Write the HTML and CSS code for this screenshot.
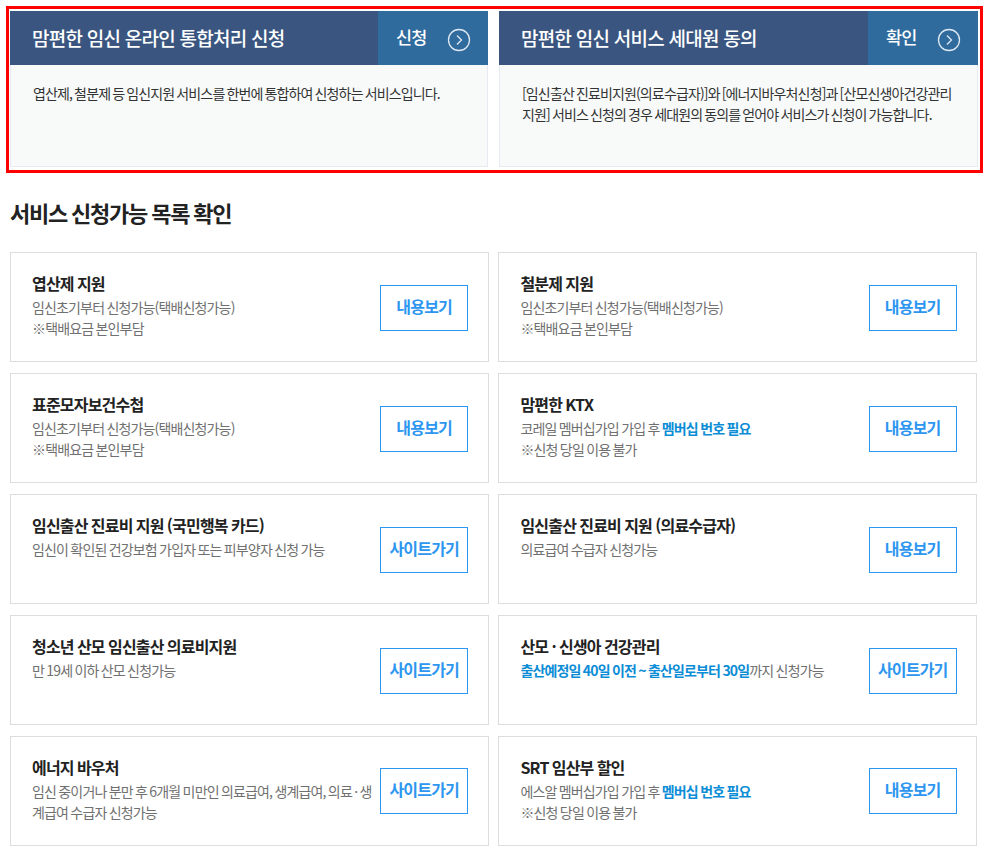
FILE: index.html
```html
<!DOCTYPE html>
<html lang="ko">
<head>
<meta charset="utf-8">
<title>서비스 신청</title>
<link rel="stylesheet" href="styles.css">
</head>
<body>
<section class="highlight">
  <article class="panel">
    <header class="panel-head">
      <h2 class="panel-title">맘편한 임신 온라인 통합처리 신청</h2>
      <a class="panel-btn"><span>신청</span><svg class="chev" viewBox="0 0 24 24" width="24" height="24"><circle cx="12" cy="12" r="10.5"/><path d="M10 7.5l4.5 4.5-4.5 4.5"/></svg></a>
    </header>
    <p class="panel-body">엽산제, 철분제 등 임신지원 서비스를 한번에 통합하여 신청하는 서비스입니다.</p>
  </article>
  <article class="panel">
    <header class="panel-head">
      <h2 class="panel-title">맘편한 임신 서비스 세대원 동의</h2>
      <a class="panel-btn"><span>확인</span><svg class="chev" viewBox="0 0 24 24" width="24" height="24"><circle cx="12" cy="12" r="10.5"/><path d="M10 7.5l4.5 4.5-4.5 4.5"/></svg></a>
    </header>
    <p class="panel-body">[임신출산 진료비지원(의료수급자)]와 [에너지바우처신청]과 [산모신생아건강관리 지원] 서비스 신청의 경우 세대원의 동의를 얻어야 서비스가 신청이 가능합니다.</p>
  </article>
</section>
<h1 class="section-title">서비스 신청가능 목록 확인</h1>
<section class="cards">
  <div class="card"><div class="info"><h3>엽산제 지원</h3><p>임신초기부터 신청가능(택배신청가능)<br>※택배요금 본인부담</p></div><a class="btn">내용보기</a></div>
  <div class="card"><div class="info"><h3>철분제 지원</h3><p>임신초기부터 신청가능(택배신청가능)<br>※택배요금 본인부담</p></div><a class="btn">내용보기</a></div>
  <div class="card"><div class="info"><h3>표준모자보건수첩</h3><p>임신초기부터 신청가능(택배신청가능)<br>※택배요금 본인부담</p></div><a class="btn">내용보기</a></div>
  <div class="card"><div class="info"><h3>맘편한 KTX</h3><p>코레일 멤버십가입 가입 후 <strong>멤버십 번호 필요</strong><br>※신청 당일 이용 불가</p></div><a class="btn">내용보기</a></div>
  <div class="card"><div class="info"><h3>임신출산 진료비 지원 (국민행복 카드)</h3><p>임신이 확인된 건강보험 가입자 또는 피부양자 신청 가능</p></div><a class="btn">사이트가기</a></div>
  <div class="card"><div class="info"><h3>임신출산 진료비 지원 (의료수급자)</h3><p>의료급여 수급자 신청가능</p></div><a class="btn">내용보기</a></div>
  <div class="card"><div class="info"><h3>청소년 산모 임신출산 의료비지원</h3><p>만 19세 이하 산모 신청가능</p></div><a class="btn">사이트가기</a></div>
  <div class="card"><div class="info"><h3>산모 · 신생아 건강관리</h3><p><strong>출산예정일 40일 이전 ~ 출산일로부터 30일</strong>까지 신청가능</p></div><a class="btn">사이트가기</a></div>
  <div class="card"><div class="info"><h3>에너지 바우처</h3><p>임신 중이거나 분만 후 6개월 미만인 의료급여, 생계급여, 의료 · 생계급여 수급자 신청가능</p></div><a class="btn">사이트가기</a></div>
  <div class="card"><div class="info"><h3>SRT 임산부 할인</h3><p>에스알 멤버십가입 가입 후 <strong>멤버십 번호 필요</strong><br>※신청 당일 이용 불가</p></div><a class="btn">내용보기</a></div>
</section>
</body>
</html>
```
FILE: styles.css
```css
* { box-sizing: border-box; }
html, body { margin: 0; padding: 0; }
body {
  width: 992px;
  height: 850px;
  overflow: hidden;
  background: #fff;
  font-family: "Noto Sans CJK KR", "Noto Sans", sans-serif;
  letter-spacing: -0.05em;
}
h1, h2, h3, p { margin: 0; }

.highlight {
  margin: 6px 0 0 6px;
  width: 977px;
  height: 167px;
  border: 3px solid #f00;
  padding: 2px 2px 3px 1px;
  display: grid;
  grid-template-columns: 478px 479px;
  column-gap: 11px;
}
.panel {
  display: flex;
  flex-direction: column;
  background: #f8fafa;
  border: 1px solid #e8eaf2;
  border-top: 0;
}
.panel-head {
  display: flex;
  height: 54px;
  margin: 0 -1px;
  background: #3a5680;
}
.panel-title {
  flex: 1;
  padding-left: 22px;
  font-size: 19px;
  font-weight: 500;
  letter-spacing: -0.75px;
  line-height: 53px;
  color: #fff;
}
.panel-btn {
  width: 110px;
  background: #306b9d;
  display: flex;
  align-items: center;
  padding-left: 18px;
  color: #fff;
  font-size: 17.5px;
  font-weight: 500;
}
.panel-btn span { width: 51px; margin-bottom: 3px; }
.chev { margin-top: 4px; fill: none; stroke: #dfe8f0; stroke-width: 1.3; }
.panel-body {
  padding: 18px 22px 0;
  font-size: 14px;
  line-height: 21px;
  letter-spacing: -0.87px;
  word-spacing: -1px;
  color: #333;
}

.section-title {
  margin: 23px 0 0 10px;
  height: 32px;
  font-size: 22px;
  line-height: 32px;
  font-weight: 700;
  letter-spacing: -1.25px;
  word-spacing: -0.8px;
  color: #222;
}

.cards {
  margin: 24.3px 0 0 10px;
  display: grid;
  grid-template-columns: 478.5px 478.6px;
  grid-auto-rows: 109.8px;
  column-gap: 9.9px;
  row-gap: 11.1px;
}
.card {
  display: flex;
  align-items: center;
  justify-content: space-between;
  padding: 0 19.3px 0 21px;
  border: 1px solid #ddd;
  background: #fff;
}
.info { width: 346px; align-self: flex-start; padding-top: 18px; }
.info h3 {
  font-size: 16px;
  line-height: 24px;
  margin-bottom: 2px;
  font-weight: 700;
  word-spacing: -0.5px;
  color: #222;
}
.info p {
  font-size: 14px;
  line-height: 21px;
  letter-spacing: -0.85px;
  word-spacing: -0.8px;
  color: #707070;
}
.info strong { font-weight: 700; color: #0c8dd6; }
.btn {
  width: 88px;
  height: 46px;
  flex: none;
  margin-top: 1.3px;
  border: 1px solid #2d96f0;
  text-align: center;
  font-size: 16px;
  font-weight: 700;
  line-height: 41px;
  color: #2d96f0;
}
```
